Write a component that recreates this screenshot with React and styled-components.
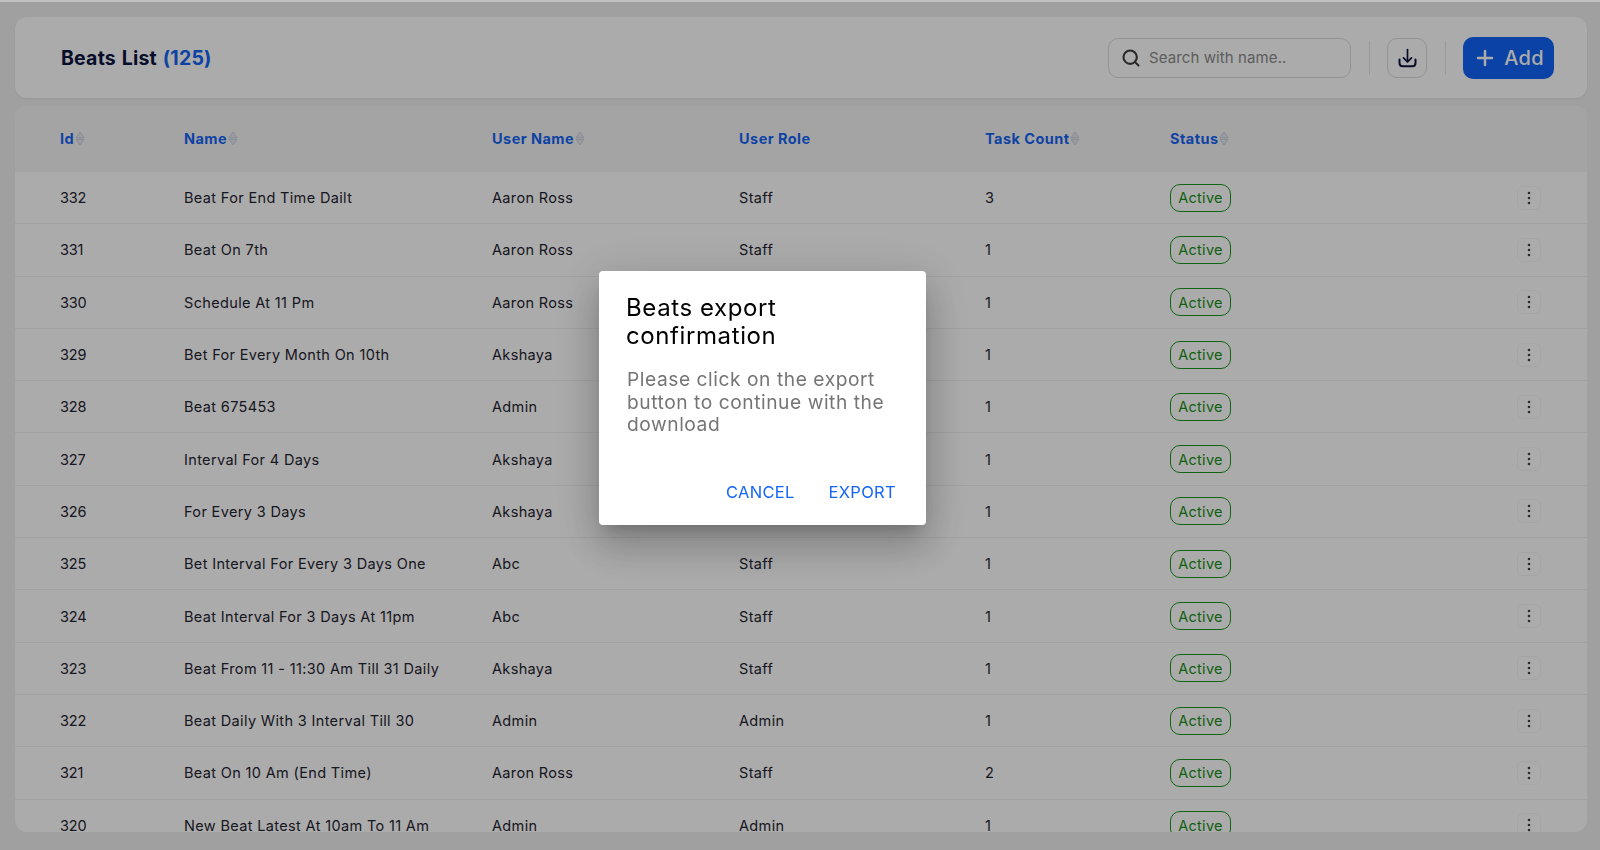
import styled, { createGlobalStyle } from "styled-components";
import { Search, Plus } from "lucide-react";

const GlobalStyle = createGlobalStyle`
  html, body {
    margin: 0;
    height: 100%;
    overflow: hidden;
  }
  body {
    background: #f0f0f0;
    font-family: Inter, "Liberation Sans", sans-serif;
  }
`;

const Page = styled.div`
  height: 850px;
  box-sizing: border-box;
  padding: 17px 13px 18px 15px;
  display: flex;
  flex-direction: column;
  gap: 8px;
  background: #efefef;
  overflow: hidden;
`;

const TopStrip = styled.div`
  position: absolute;
  top: 0;
  left: 0;
  right: 0;
  height: 2px;
  background: #ffffff;
  opacity: 0.35;
`;

// Top bar

const Header = styled.header`
  flex: 0 0 81px;
  display: flex;
  align-items: center;
  justify-content: space-between;
  padding: 0 33px 0 46px;
  background: #ffffff;
  border-radius: 12px;
  box-shadow: 0 1px 3px rgba(0, 0, 0, 0.06);
`;

const Title = styled.h1`
  margin: 0;
  font-size: 19.5px;
  font-weight: 700;
  letter-spacing: 0.2px;
  word-spacing: 1px;
  color: #0c1440;
`;

const Count = styled.span`
  color: #1565f5;
`;

const Actions = styled.div`
  display: flex;
  align-items: center;
`;

const SearchBox = styled.div`
  width: 243px;
  height: 40px;
  box-sizing: border-box;
  display: flex;
  align-items: center;
  gap: 8px;
  padding: 0 14px 0 12px;
  border: 1px solid #dcdcdc;
  border-radius: 10px;
  color: #3d3d3d;
`;

const SearchInput = styled.input`
  flex: 1;
  min-width: 0;
  border: none;
  outline: none;
  background: none;
  padding: 0;
  font-family: inherit;
  font-size: 15px;
  letter-spacing: 0.1px;
  &::placeholder {
    color: #8b8b8b;
    opacity: 1;
  }
`;

const Divider = styled.span`
  width: 1px;
  height: 34px;
  margin: 0 17.5px;
  background: #e6e6e6;
`;

const IconButton = styled.button`
  width: 40px;
  height: 40px;
  padding: 0;
  display: flex;
  align-items: center;
  justify-content: center;
  background: none;
  border: 1px solid #dcdcdc;
  border-radius: 10px;
  color: #0c1440;
`;

const AddButton = styled.button`
  width: 91px;
  height: 42px;
  padding: 0;
  display: flex;
  align-items: center;
  justify-content: center;
  gap: 7px;
  border: none;
  border-radius: 10px;
  background: #1163f7;
  color: #ffffff;
  font-family: inherit;
  font-size: 20px;
  font-weight: 500;
  letter-spacing: 0.3px;
`;

// Table

const Table = styled.section`
  flex: 1;
  min-height: 0;
  overflow: hidden;
  background: #ffffff;
  border-radius: 12px;
`;

const Row = styled.div`
  display: grid;
  grid-template-columns: 124px 308px 247px 246px 185px 1fr 70px;
  align-items: center;
  box-sizing: border-box;
  padding-left: 45px;
`;

const HeadRow = styled(Row)`
  height: 66px;
  padding-bottom: 2px;
  background: #f5f5f5;
`;

const BodyRow = styled(Row)`
  height: 52.3px;
  border-bottom: 1px solid #f1f1f1;
`;

const HeadCell = styled.div`
  display: flex;
  align-items: center;
  gap: 1px;
  font-size: 14.5px;
  font-weight: 700;
  letter-spacing: 0.45px;
  color: #1565f5;
`;

const Cell = styled.div`
  font-size: 14.5px;
  letter-spacing: 0.35px;
  color: #1f2430;
  white-space: nowrap;
`;

const NumberCell = styled(Cell)`
  letter-spacing: -0.2px;
`;

const Badge = styled.span`
  display: inline-flex;
  align-items: center;
  justify-content: center;
  box-sizing: border-box;
  width: 61px;
  height: 28px;
  border: 1.5px solid #1b951b;
  border-radius: 10px;
  font-size: 14.5px;
  letter-spacing: 0.3px;
  color: #178f17;
`;

const MenuButton = styled.button`
  width: 24px;
  height: 24px;
  padding: 0;
  display: flex;
  align-items: center;
  justify-content: center;
  background: none;
  border: 1px solid #f7f7f7;
  border-radius: 6px;
  color: #444444;
`;

// Dialog

const Overlay = styled.div`
  position: fixed;
  inset: 0;
  background: rgba(0, 0, 0, 0.33);
`;

const Dialog = styled.div`
  position: fixed;
  left: 599px;
  top: 271px;
  width: 327px;
  height: 254px;
  box-sizing: border-box;
  padding: 23px 27px 0 27px;
  background: #ffffff;
  border-radius: 4px;
  box-shadow: 0 11px 15px -7px rgba(0, 0, 0, 0.2), 0 24px 38px 3px rgba(0, 0, 0, 0.14),
    0 9px 46px 8px rgba(0, 0, 0, 0.12);
`;

const DialogTitle = styled.h2`
  margin: 0;
  font-size: 24px;
  line-height: 28px;
  font-weight: 400;
  letter-spacing: 0.6px;
  color: #000000;
`;

const DialogText = styled.p`
  margin: 18px 0 0 1px;
  font-size: 19.2px;
  line-height: 22.5px;
  letter-spacing: 0.55px;
  color: #757575;
`;

const DialogActions = styled.div`
  position: absolute;
  right: 30px;
  bottom: 23px;
  display: flex;
  gap: 34px;
`;

const DialogButton = styled.button`
  padding: 0;
  border: none;
  background: none;
  font-family: inherit;
  font-size: 16.5px;
  line-height: 20px;
  letter-spacing: 0.3px;
  color: #1565f5;
`;

const rows = [
  [332, "Beat For End Time Dailt", "Aaron Ross", "Staff", 3],
  [331, "Beat On 7th", "Aaron Ross", "Staff", 1],
  [330, "Schedule At 11 Pm", "Aaron Ross", "Staff", 1],
  [329, "Bet For Every Month On 10th", "Akshaya", "Staff", 1],
  [328, "Beat 675453", "Admin", "Staff", 1],
  [327, "Interval For 4 Days", "Akshaya", "Staff", 1],
  [326, "For Every 3 Days", "Akshaya", "Staff", 1],
  [325, "Bet Interval For Every 3 Days One", "Abc", "Staff", 1],
  [324, "Beat Interval For 3 Days At 11pm", "Abc", "Staff", 1],
  [323, "Beat From 11 - 11:30 Am Till 31 Daily", "Akshaya", "Staff", 1],
  [322, "Beat Daily With 3 Interval Till 30", "Admin", "Admin", 1],
  [321, "Beat On 10 Am (End Time)", "Aaron Ross", "Staff", 2],
  [320, "New Beat Latest At 10am To 11 Am", "Admin", "Admin", 1],
];

const SortIcon = () => (
  <svg width="10" height="15" viewBox="0 0 10 15" fill="#e4e8f0" stroke="#c2c9d8" strokeWidth="0.8" strokeLinejoin="round">
    <path d="M5 1 9 6.7H1z" />
    <path d="M5 14 1 8.3h8z" />
  </svg>
);

const DownloadIcon = () => (
  <svg width="19" height="20" viewBox="0 0 19 20" fill="none" stroke="currentColor" strokeLinecap="round" strokeLinejoin="round">
    <g strokeWidth="1.7">
      <path d="M9.5 1.5v12" />
      <path d="M5.5 9.8l4 4 4-4" />
    </g>
    <path d="M1.5 11.5v3.6c0 1.9 1.3 3.2 3.2 3.2h9.6c1.9 0 3.2-1.3 3.2-3.2v-3.6" strokeWidth="2" />
  </svg>
);

const DotsIcon = () => (
  <svg width="4" height="14" viewBox="0 0 4 14" fill="currentColor">
    <circle cx="2" cy="2" r="1.3" />
    <circle cx="2" cy="7" r="1.3" />
    <circle cx="2" cy="12" r="1.3" />
  </svg>
);

const App = () => {
  return (
    <>
      <GlobalStyle />
      <Page>
        <Header>
          <Title>
            Beats List <Count>(125)</Count>
          </Title>
          <Actions>
            <SearchBox>
              <Search size={20} strokeWidth={2.5} />
              <SearchInput placeholder="Search with name.." />
            </SearchBox>
            <Divider />
            <IconButton>
              <DownloadIcon />
            </IconButton>
            <Divider />
            <AddButton>
              <Plus size={24} strokeWidth={2.5} />
              Add
            </AddButton>
          </Actions>
        </Header>
        <Table>
          <HeadRow>
            <HeadCell>Id<SortIcon /></HeadCell>
            <HeadCell>Name<SortIcon /></HeadCell>
            <HeadCell>User Name<SortIcon /></HeadCell>
            <HeadCell>User Role</HeadCell>
            <HeadCell>Task Count<SortIcon /></HeadCell>
            <HeadCell>Status<SortIcon /></HeadCell>
            <span />
          </HeadRow>
          {rows.map(([id, name, user, role, tasks]) => (
            <BodyRow key={id}>
              <NumberCell>{id}</NumberCell>
              <Cell>{name}</Cell>
              <Cell>{user}</Cell>
              <Cell>{role}</Cell>
              <NumberCell>{tasks}</NumberCell>
              <Cell><Badge>Active</Badge></Cell>
              <MenuButton><DotsIcon /></MenuButton>
            </BodyRow>
          ))}
        </Table>
      </Page>
      <Overlay />
      <TopStrip />
      <Dialog>
        <DialogTitle>Beats export confirmation</DialogTitle>
        <DialogText>Please click on the export button to continue with the download</DialogText>
        <DialogActions>
          <DialogButton>CANCEL</DialogButton>
          <DialogButton>EXPORT</DialogButton>
        </DialogActions>
      </Dialog>
    </>
  );
};

export default App;
